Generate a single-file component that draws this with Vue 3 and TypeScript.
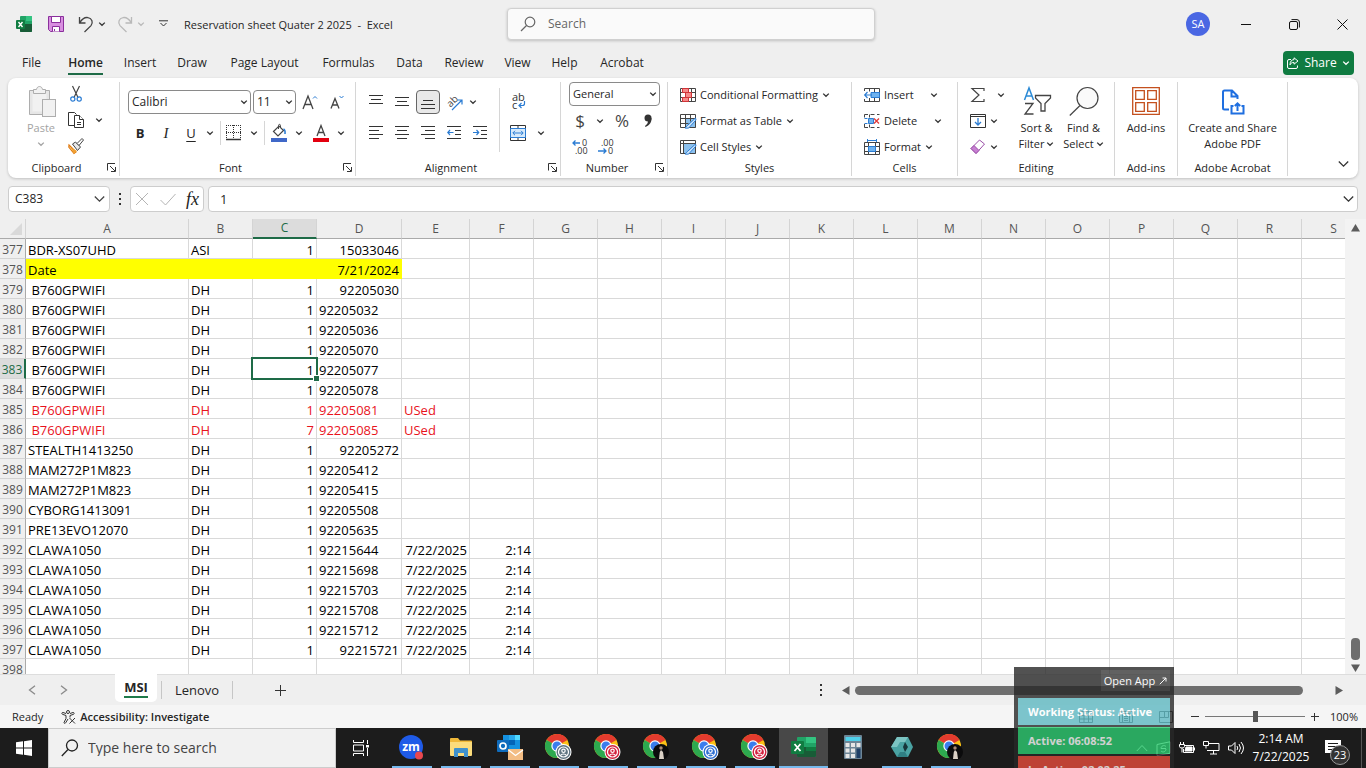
<script setup lang="ts">
import { h, ref } from 'vue'

type Cell = string
interface Row {
  n: number
  cells: Cell[]
  kind?: 'date' | 'used'
  rightD?: boolean
}

const Chevron = () =>
  h('svg', { class: 'chev', width: 8, height: 8, viewBox: '0 0 8 8', fill: 'none', 'aria-hidden': 'true' }, [
    h('path', { d: 'M1.2 2.6 4 5.3 6.8 2.6', stroke: 'currentColor', 'stroke-width': 1.3 }),
  ])

const Launcher = () =>
  h('svg', { width: 9, height: 9, viewBox: '0 0 9 9', fill: 'none', stroke: '#333', 'aria-hidden': 'true' }, [
    h('path', { d: 'M.5 7.5V.5H8M3 3l5 5M8.500 4v4.500H4' }),
  ])

const ChromeIcon = (props: { badge: string }) => {
  const parts = [
    h('circle', { cx: 12, cy: 12, r: 12, fill: '#fbc116' }),
    h('path', { d: 'M12 12 1.600 6A12 12 0 0 1 22.400 6Z', fill: '#e33b2e' }),
    h('path', { d: 'M1.600 6A12 12 0 0 0 12 24L17.200 15 12 12Z', fill: '#2da94f' }),
    h('path', { d: 'M12 6H22.400A12 12 0 0 0 12 0Z', fill: '#e33b2e' }),
    h('circle', { cx: 12, cy: 12, r: 5.7, fill: '#fff' }),
    h('circle', { cx: 12, cy: 12, r: 4.500, fill: '#3b7ded' }),
  ]
  if (props.badge === 'photo') {
    parts.push(
      h('circle', { cx: 18, cy: 18, r: 8, fill: '#0b0b0c' }),
      h('path', { d: 'M16 25 16.800 18 18 16l2 2 1 7Z', fill: '#d8cfc4' }),
      h('circle', { cx: 18, cy: 14, r: 1.700, fill: '#a98a76' }),
    )
  } else {
    parts.push(
      h('circle', { cx: 18.500, cy: 18, r: 8, fill: '#fff' }),
      h('circle', { cx: 18.500, cy: 18, r: 7, fill: props.badge }),
      h('circle', { cx: 18.500, cy: 18, r: 5, fill: 'none', stroke: '#fff', 'stroke-width': 1.2 }),
      h('circle', { cx: 18.500, cy: 16.800, r: 1.7, fill: 'none', stroke: '#fff', 'stroke-width': 1.2 }),
      h('path', { d: 'M15.500 21.500c1-2 5-2 6 0', fill: 'none', stroke: '#fff', 'stroke-width': 1.2 }),
    )
  }
  return h('svg', { width: 27, height: 27, viewBox: '0 0 27 27', 'aria-hidden': 'true' }, parts)
}
ChromeIcon.props = ['badge']

const menu = ['File', 'Home', 'Insert', 'Draw', 'Page Layout', 'Formulas', 'Data', 'Review', 'View', 'Help', 'Acrobat']
const columns = 'ABCDEFGHIJKLMNOPQRS'.split('')

const board = (n: number, serial: string, qty = '1'): Row => ({ n, cells: ['\u00a0B760GPWIFI', 'DH', qty, serial] })
const claw = (n: number, serial: string): Row => ({ n, cells: ['CLAWA1050', 'DH', '1', serial, '7/22/2025', '2:14'] })

const rows: Row[] = [
  { n: 377, cells: ['BDR-XS07UHD', 'ASI', '1', '15033046'], rightD: true },
  { n: 378, cells: ['Date', '', '', '7/21/2024'], kind: 'date', rightD: true },
  { ...board(379, '92205030'), rightD: true },
  board(380, '92205032'),
  board(381, '92205036'),
  board(382, '92205070'),
  board(383, '92205077'),
  board(384, '92205078'),
  { n: 385, cells: ['\u00a0B760GPWIFI', 'DH', '1', '92205081', 'USed'], kind: 'used' },
  { n: 386, cells: ['\u00a0B760GPWIFI', 'DH', '7', '92205085', 'USed'], kind: 'used' },
  { n: 387, cells: ['STEALTH1413250', 'DH', '1', '92205272'], rightD: true },
  { n: 388, cells: ['MAM272P1M823', 'DH', '1', '92205412'] },
  { n: 389, cells: ['MAM272P1M823', 'DH', '1', '92205415'] },
  { n: 390, cells: ['CYBORG1413091', 'DH', '1', '92205508'] },
  { n: 391, cells: ['PRE13EVO12070', 'DH', '1', '92205635'] },
  claw(392, '92215644'),
  claw(393, '92215698'),
  claw(394, '92215703'),
  claw(395, '92215708'),
  claw(396, '92215712'),
  { ...claw(397, '92215721'), rightD: true },
  { n: 398, cells: [] },
]

const isRight = (row: Row, c: number) =>
  c === 2 || c === 5 || (c === 3 && !!row.rightD) || (c === 4 && row.kind !== 'used')

const nameBox = ref('C383')
const formula = ref('1')
const zoom = ref(50)
</script>

<template>
  <div class="screen">
    <header class="titlebar">
      <div class="quick">
        <svg width="16" height="16" viewBox="0 0 16 16" aria-hidden="true">
          <rect x="4" width="12" height="16" rx="1" fill="#21a366" /><path d="M10 0h5a1 1 0 0 1 1 1v4h-6z" fill="#33c481" /><path d="M4 8h12v7a1 1 0 0 1-1 1H5a1 1 0 0 1-1-1z" fill="#185c37" />
          <rect y="4" width="9" height="9" rx="1" fill="#107c41" /><path d="m2.500 6 4 5M6.500 6l-4 5" stroke="#fff" stroke-width="1.4" />
        </svg>
        <button class="bare" aria-label="Save">
          <svg width="16" height="16" viewBox="0 0 16 16" fill="#d88fe0" stroke="#8a2f9c">
            <path d="M.5.5h15v15h-13l-2-2z" /><path d="M3.500.5h9v6h-9zM4.500 15.500v-5h7v5" fill="#fff" /><path d="M6.500 13v2" />
          </svg>
        </button>
        <button class="bare undo" aria-label="Undo">
          <svg width="16" height="17" viewBox="0 0 16 17" fill="none" stroke="#444" stroke-width="1.3"><path d="M1.500 1v6h6M1.800 6.700C4 3 7 1 10 1.600c4 .6 5.500 5 3 8L6.500 16" /></svg>
          <Chevron />
        </button>
        <button class="bare redo" aria-label="Redo" disabled>
          <svg width="16" height="17" viewBox="0 0 16 17" fill="none" stroke="#b9b9b9" stroke-width="1.3"><path d="M14.500 1v6h-6M14.200 6.700C12 3 9 1 6 1.600c-4 .6-5.500 5-3 8L9.500 16" /></svg>
          <Chevron />
        </button>
        <button class="bare custom" aria-label="Customize quick access">
          <svg width="9" height="8" viewBox="0 0 9 8" fill="none" stroke="#333"><path d="M0 .8h9M1.500 3l3 3 3-3" /></svg>
        </button>
        <h1 class="doc">Reservation sheet Quater 2 2025&nbsp; -&nbsp; Excel</h1>
      </div>
      <label class="search">
        <svg width="16" height="16" viewBox="0 0 16 16" fill="none" stroke="#666" stroke-width="1.2"><circle cx="10" cy="6" r="4.800" /><path d="M6.500 9.500 1 15" /></svg>
        <input type="search" placeholder="Search" aria-label="Search" />
      </label>
      <div class="window">
        <button class="avatar">SA</button>
        <button class="bare" aria-label="Minimize"><svg width="11" height="11" viewBox="0 0 11 11" stroke="#111"><path d="M0 5.500h10" /></svg></button>
        <button class="bare" aria-label="Restore"><svg width="11" height="11" viewBox="0 0 11 11" fill="none" stroke="#111"><rect x=".5" y="2.500" width="8" height="8" rx="1.500" /><path d="M2.500.6H8A2.500 2.500 0 0 1 10.400 3v5.500" /></svg></button>
        <button class="bare" aria-label="Close"><svg width="11" height="11" viewBox="0 0 11 11" stroke="#111"><path d="m.5.5 10 10m0-10-10 10" /></svg></button>
      </div>
    </header>

    <nav class="menu">
      <div class="tabs">
        <button v-for="m in menu" :key="m" class="tab" :class="{ on: m === 'Home' }"><span>{{ m }}</span></button>
      </div>
      <button class="share">
        <svg width="12" height="12" viewBox="0 0 12 12" fill="none" stroke="#fff"><path d="M4 2.500H2A1.500 1.500 0 0 0 .5 4v6A1.500 1.500 0 0 0 2 11.500h7A1.500 1.500 0 0 0 10.500 10V8.500M7 .8 11 4 7 7.200V5.400C5 5.400 4 6 3 7.800 3 4.500 4.500 2.800 7 2.600z" /></svg>
        Share
        <Chevron />
      </button>
    </nav>

    <section class="ribbon">
      <div class="group clipboard">
        <div class="body">
          <button class="big paste" disabled>
            <svg width="32" height="32" viewBox="0 0 32 32" fill="#f1f1f1" stroke="#adadad"><path d="M4.500 4.500h20v24h-20z" fill="#e6e6e6" /><path d="M7.500 7.500h14v18h-14z" stroke="none" /><path d="M8.500 7.500v-4h3c.5-4 5.500-4 6 0h3v4z" /><rect x="17.500" y="13.500" width="13" height="17" /></svg>
            <span>Paste</span><Chevron />
          </button>
          <div class="stack">
            <button class="tool" aria-label="Cut"><svg width="16" height="16" viewBox="0 0 16 16" fill="none"><path d="m4.500 0 5.500 11.500M11.500 0 6 11.500" stroke="#444" stroke-width="1.200" /><circle cx="4.800" cy="13" r="2.100" stroke="#2b7cd3" stroke-width="1.200" /><circle cx="11.200" cy="13" r="2.100" stroke="#2b7cd3" stroke-width="1.200" /></svg></button>
            <button class="tool split" aria-label="Copy"><svg width="16" height="16" viewBox="0 0 16 16" fill="#fff" stroke="#333"><path d="M6 13.500H.5V.5h6l2 2" /><path d="M6.500 3.500h5l4 4v8h-9z" /><path d="M11.500 3.500v4h4M9 10.500h4M9 12.500h4" /></svg><Chevron /></button>
            <button class="tool" aria-label="Format Painter"><svg width="16" height="16" viewBox="0 0 16 16"><path d="m1 7 7 7-2 1.500L.8 9z" fill="#fff" stroke="#e07a10" stroke-width="1.200" /><path d="m2 9 7 4-3 2.500z" fill="#f0a030" /><path d="m4.500 6 3-2 5 5-3 3.500z" fill="#e9e9e9" stroke="#444" /><path d="m9 5.500 5-5 1.500 1.500-4.500 5.500z" fill="#fff" stroke="#444" /></svg></button>
          </div>
        </div>
        <footer><span>Clipboard</span><button class="bare" aria-label="Clipboard options"><Launcher /></button></footer>
      </div>

      <div class="group font">
        <div class="body col">
          <div class="line first">
            <label class="combo face"><select aria-label="Font"><option>Calibri</option></select><Chevron /></label>
            <label class="combo size"><select aria-label="Font size"><option>11</option></select><Chevron /></label>
            <button class="tool w27" aria-label="Increase font size"><svg width="16" height="16" viewBox="0 0 16 16" fill="none"><path d="m1 15 5-13 5 13M2.800 10.500h6.400" stroke="#444" stroke-width="1.300" /><path d="m11 4.500 2-2 2 2" stroke="#2b7cd3" /></svg></button>
            <button class="tool w27" aria-label="Decrease font size"><svg width="16" height="16" viewBox="0 0 16 16" fill="none"><path d="m2 14.500 4-10 4 10M3.500 11h5" stroke="#444" stroke-width="1.300" /><path d="m10.500 2 2 2 2-2" stroke="#2b7cd3" /></svg></button>
          </div>
          <div class="line second">
            <button class="tool w26 bold">B</button>
            <button class="tool w26 ital">I</button>
            <button class="tool w24 under">U</button>
            <button class="tool w16" aria-label="Underline options"><Chevron /></button>
            <i class="rule"></i>
            <button class="tool w26" aria-label="Borders"><svg width="16" height="16" viewBox="0 0 16 16" stroke="#333"><path d="M.5 0v14M7.500 0v14M14.500 0v14M0 .5h15M0 7.500h15" stroke-dasharray="1 1" /><path d="M0 14.500h15" stroke-width="1.500" /></svg></button>
            <button class="tool w16" aria-label="Border options"><Chevron /></button>
            <i class="rule"></i>
            <button class="tool w28" aria-label="Fill color"><svg width="16" height="18" viewBox="0 0 16 18" fill="none"><path d="M2.500 7.500 8 2l4.500 4.500L7 12z" stroke="#444" stroke-width="1.200" /><path d="M7.500 5V1.500c0-1.500 2-1.500 2 0V3" stroke="#444" /><path d="M12.500 5c1.500.5 1.800 2 1.500 5" stroke="#2b7cd3" stroke-width="1.600" /><path d="M0 14h16v4H0z" fill="#4068c8" /></svg></button>
            <button class="tool w12" aria-label="Fill color options"><Chevron /></button>
            <button class="tool w32" aria-label="Font color"><svg width="16" height="18" viewBox="0 0 16 18" fill="none"><path d="m4 12 4-10.500L12 12M5.500 8.500h5" stroke="#444" stroke-width="1.300" /><path d="M0 14h16v4H0z" fill="#e3000f" /></svg></button>
            <button class="tool w8" aria-label="Font color options"><Chevron /></button>
          </div>
        </div>
        <footer><span>Font</span><button class="bare" aria-label="Font options"><Launcher /></button></footer>
      </div>

      <div class="group alignment">
        <div class="body">
          <div class="col">
            <div class="line first">
              <button class="tool w26" aria-label="Top align"><svg width="14" height="16" viewBox="0 0 14 16" stroke="#333"><path d="M0 1.500h14M2 5.500h10M0 9.500h14" /></svg></button>
              <button class="tool w26" aria-label="Middle align"><svg width="14" height="16" viewBox="0 0 14 16" stroke="#333"><path d="M0 3.500h14M2 7.500h10M0 11.500h14" /></svg></button>
              <button class="tool w24 pressed" aria-label="Bottom align"><svg width="14" height="16" viewBox="0 0 14 16" stroke="#333"><path d="M2 6.500h10M0 10.500h14M0 14.500h14" /></svg></button>
              <button class="tool w28" aria-label="Orientation"><svg width="17" height="17" viewBox="0 0 17 17"><text x="0" y="11" transform="rotate(-45 5 8)" font-size="10" fill="#444">ab</text><path d="m5 16 10-10M10.500 6H15v4.500" fill="none" stroke="#2b7cd3" stroke-width="1.200" /></svg></button>
              <button class="tool w8" aria-label="Orientation options"><Chevron /></button>
            </div>
            <div class="line second">
              <button class="tool w26" aria-label="Align left"><svg width="14" height="14" viewBox="0 0 14 14" stroke="#333"><path d="M0 .5h14M0 4.500h10M0 8.500h14M0 12.500h10" /></svg></button>
              <button class="tool w26" aria-label="Center"><svg width="14" height="14" viewBox="0 0 14 14" stroke="#333"><path d="M0 .5h14M2 4.500h10M0 8.500h14M2 12.500h10" /></svg></button>
              <button class="tool w26" aria-label="Align right"><svg width="14" height="14" viewBox="0 0 14 14" stroke="#333"><path d="M0 .5h14M4 4.500h10M0 8.500h14M4 12.500h10" /></svg></button>
              <button class="tool w26" aria-label="Decrease indent"><svg width="14" height="14" viewBox="0 0 14 14" fill="none" stroke="#333"><path d="M0 .5h14M8 4.500h6M8 8.500h6M0 12.500h14" /><path d="M6.500 6.500H1M3 4 .8 6.500 3 9" stroke="#2b7cd3" stroke-width="1.200" /></svg></button>
              <button class="tool w26" aria-label="Increase indent"><svg width="14" height="14" viewBox="0 0 14 14" fill="none" stroke="#333"><path d="M0 .5h14M8 4.500h6M8 8.500h6M0 12.500h14" /><path d="M0 6.500h5.500M3.500 4l2.200 2.500L3.500 9" stroke="#2b7cd3" stroke-width="1.200" /></svg></button>
            </div>
          </div>
          <i class="rule tall"></i>
          <div class="col">
            <div class="line first">
              <button class="tool w28" aria-label="Wrap text"><svg width="16" height="18" viewBox="0 0 16 18"><text font-size="11" fill="#333"><tspan x="1" y="8">ab</tspan><tspan x="1" y="16">c</tspan></text><path d="M13.500 8v2.500q0 2-2 2H8M10.500 10 8 12.500l2.500 2.500" fill="none" stroke="#2b7cd3" stroke-width="1.200" /></svg></button>
            </div>
            <div class="line second">
              <button class="tool w26" aria-label="Merge and center"><svg width="16" height="16" viewBox="0 0 16 16" fill="none" stroke="#333"><path d="M.5.5h15v15H.5zM8 .5v3M8 12v3.500" /><path d="M.5 3.500h15v9H.5z" fill="#d6e9fa" stroke="#2b7cd3" /><path d="M3 8h10M5 5.800 2.800 8 5 10.200M11 5.800 13.200 8 11 10.200" stroke="#2b7cd3" /></svg></button>
              <button class="tool w20" aria-label="Merge options"><Chevron /></button>
            </div>
          </div>
        </div>
        <footer><span>Alignment</span><button class="bare" aria-label="Alignment options"><Launcher /></button></footer>
      </div>

      <div class="group number">
        <div class="body col">
          <label class="combo general"><select aria-label="Number format"><option>General</option></select><Chevron /></label>
          <div class="line">
            <button class="tool w24 sym">$</button>
            <button class="tool w16" aria-label="Currency options"><Chevron /></button>
            <button class="tool w28 sym">%</button>
            <button class="tool w24" aria-label="Comma style"><svg width="8" height="14" viewBox="0 0 8 14" fill="#333"><circle cx="4" cy="4" r="3.500" /><path d="M7.500 4c.3 4-2 7.500-6 9l-.5-1c2-1.500 3-3 3-5.500z" /></svg></button>
          </div>
          <div class="line">
            <button class="tool w24" aria-label="Increase decimal"><svg width="16" height="16" viewBox="0 0 16 16"><text font-size="9" fill="#333"><tspan x="10" y="7">0</tspan><tspan x="3" y="15">.00</tspan></text><path d="M8 4H1M3.500 1.500 1 4l2.500 2.500" fill="none" stroke="#2b7cd3" stroke-width="1.300" /></svg></button>
            <button class="tool w28" aria-label="Decrease decimal"><svg width="16" height="16" viewBox="0 0 16 16"><text font-size="9" fill="#333"><tspan x="3" y="7">.00</tspan><tspan x="10" y="15">0</tspan></text><path d="M0 12h8M5.500 9.500 8 12l-2.500 2.500" fill="none" stroke="#2b7cd3" stroke-width="1.300" /></svg></button>
          </div>
        </div>
        <footer><span>Number</span><button class="bare" aria-label="Number options"><Launcher /></button></footer>
      </div>

      <div class="group styles">
        <div class="body col">
          <button class="tool text"><svg width="16" height="14" viewBox="0 0 16 14" fill="none" stroke="#444"><path d="M.5.5h15v13H.5zM.5 4.500h15M.5 9.500h15M5.500.5v13M11.500.5v13" /><path d="M2.500.5h6v4h-6zM5.500 4.500h6v5h-6zM2.500 9.500h6v4h-6z" fill="#f58a8a" stroke="#d13438" /></svg>Conditional Formatting<Chevron /></button>
          <button class="tool text"><svg width="16" height="15" viewBox="0 0 16 15" fill="none" stroke="#444"><path d="M5 4h11v10H5z" fill="#8cc1ee" stroke="none" /><path d="M.5.5h15v13H.5zM.5 4.500h15M.5 9.500h8M5.500.5v13M10.500.5v7" /><path d="M15.500 4 8 11c-1 .5-1.500 2-3 3 3 .5 4.500 0 5-1.500L16 6z" fill="#cfe6fb" stroke="#2b7cd3" /></svg>Format as Table<Chevron /></button>
          <button class="tool text"><svg width="16" height="15" viewBox="0 0 16 15" fill="none" stroke="#444"><path d="M3 3h13v11H3z" fill="#8cc1ee" stroke="none" /><path d="M.5.5h15v13H.5zM.5 3.500h15M3.500.5v13" /><path d="M15.500 4 8 11c-1 .5-1.500 2-3 3 3 .5 4.500 0 5-1.500L16 6z" fill="#cfe6fb" stroke="#2b7cd3" /></svg>Cell Styles<Chevron /></button>
        </div>
        <footer><span>Styles</span></footer>
      </div>

      <div class="group cells">
        <div class="body col">
          <button class="tool text wide"><svg width="16" height="14" viewBox="0 0 16 14" fill="none" stroke="#444"><path d="M.5 3V.5h15v13H.5V11M5.500.5v3M10.500.5v13M5.500 10v3.500M10 4.500h5.500M10 9.500h5.500" /><path d="M7 4.500h8.500v5H7z" fill="#6fb2ee" stroke="#2b7cd3" /><path d="M8 7H1M3.500 4 .7 7l2.800 3" stroke="#2b7cd3" stroke-width="1.200" /></svg>Insert<Chevron /></button>
          <button class="tool text wide2"><svg width="16" height="14" viewBox="0 0 16 14" fill="none" stroke="#444"><path d="M4 .5H.5v3M.5 10v3.500H4M6.500 .5h4M6.500 13.500h4M13 .5h2.500M13 13.500h2.500M5.500.5v3M5.500 10.500v3" /><path d="M4.500 4.500h5v5h-5zM.5 4.500h3M.5 9.500h3" fill="#6fb2ee" stroke="#2b7cd3" /><path d="m10 4.500 5 5m0-5-5 5" stroke="#e03a3a" stroke-width="1.300" /></svg>Delete<Chevron /></button>
          <button class="tool text"><svg width="16" height="16" viewBox="0 0 16 16" fill="none" stroke="#444"><path d="M.5 3.500h15v12H.5zM.5 7.500h15M.5 12.500h15M4.500 3.500v12M11.500 3.500v12" /><path d="M4.500 7.500h7v5h-7z" fill="#6fb2ee" stroke="#2b7cd3" /><path d="M3.500 1.500h9M3.500 0v3M12.500 0v3" stroke="#2b7cd3" /></svg>Format<Chevron /></button>
        </div>
        <footer><span>Cells</span></footer>
      </div>

      <div class="group editing">
        <div class="body">
          <div class="stack">
            <button class="tool split far" aria-label="AutoSum"><svg width="16" height="16" viewBox="0 0 16 16" fill="none" stroke="#444" stroke-width="1.200"><path d="M14 4V1.500H2L9 8l-7 6.500h12V12" /></svg><Chevron /></button>
            <button class="tool split" aria-label="Fill"><svg width="16" height="14" viewBox="0 0 16 14" fill="none" stroke="#333"><path d="M.5.500h15v13H.5zM.5 2.500h15" /><path d="M8 4v7M5 8l3 3 3-3" stroke="#2b7cd3" stroke-width="1.300" /></svg><Chevron /></button>
            <button class="tool split" aria-label="Clear"><svg width="16" height="16" viewBox="0 0 16 16" fill="#fff" stroke="#9b4fa8"><path d="M1 9.500 9.500 1l5 4L6 14.500z" /><path d="M1 9.500 4 6.500l5 5-3 3z" fill="#c77fd2" /></svg><Chevron /></button>
          </div>
          <button class="big w46">
            <svg width="30" height="32" viewBox="0 0 30 32" fill="none" stroke="#444" stroke-width="1.300"><path d="m2.500 14 4.500-12 4.500 12M4 10h6" stroke="#2b8ad6" stroke-width="1.500" /><path d="M3 17.500h8L3 28h8.500M13.500 9.500h15v2.500l-5.500 5.500v7.500h-4v-7.500l-5.500-5.500z" /></svg>
            <span>Sort &amp;</span><span>Filter <Chevron /></span>
          </button>
          <button class="big w46">
            <svg width="30" height="32" viewBox="0 0 30 32" fill="#fafafa" stroke="#444" stroke-width="1.200"><circle cx="18.500" cy="12" r="10.500" /><path d="M11 19.500.8 29.500" /></svg>
            <span>Find &amp;</span><span>Select <Chevron /></span>
          </button>
        </div>
        <footer><span>Editing</span></footer>
      </div>

      <div class="group addins">
        <div class="body center">
          <button class="big">
            <svg width="28" height="32" viewBox="0 0 28 32" fill="none" stroke="#c4501e" stroke-width="1.300"><path d="M.700 1.700h26.600v26.600H.700zM3.700 4.700h8.600v8.600H3.700zM15.700 4.700h8.600v8.600h-8.600zM3.700 16.700h8.600v8.600H3.700zM15.700 16.700h8.600v8.600h-8.600z" /></svg>
            <span>Add-ins</span>
          </button>
        </div>
        <footer><span>Add-ins</span></footer>
      </div>

      <div class="group acrobat">
        <div class="body center">
          <button class="big">
            <svg width="24" height="32" viewBox="0 0 24 32" fill="none" stroke="#1f6fe0" stroke-width="2"><path d="M8 23.500H3.500A1.500 1.500 0 0 1 2 22V6a1.500 1.500 0 0 1 1.500-1.500H11l5.500 5.500v3M10.500 4.500V10.500h6M12.500 20H10.500v7.500h12V20h-2" /><path d="M16.500 25v-7.500M13.800 20l2.700-2.700L19.200 20" /></svg>
            <span>Create and Share</span><span>Adobe PDF</span>
          </button>
        </div>
        <footer><span>Adobe Acrobat</span></footer>
      </div>
      <button class="bare collapse" aria-label="Collapse ribbon"><svg width="11" height="8" viewBox="0 0 11 8" fill="none" stroke="#333" stroke-width="1.300"><path d="m.8 1.500 4.700 4.700 4.700-4.700" /></svg></button>
    </section>

    <section class="formula">
      <label class="namebox"><input v-model="nameBox" aria-label="Name box" /><svg width="11" height="8" viewBox="0 0 11 8" fill="none" stroke="#444" stroke-width="1.300"><path d="m.8 1.500 4.700 4.700 4.700-4.700" /></svg></label>
      <i class="dots"></i>
      <div class="fx">
        <button class="bare" aria-label="Cancel"><svg width="14" height="14" viewBox="0 0 14 14" stroke="#b5b5b5"><path d="m1 1 12 12M13 1 1 13" /></svg></button>
        <button class="bare" aria-label="Enter"><svg width="16" height="14" viewBox="0 0 16 14" fill="none" stroke="#b5b5b5"><path d="m.5 8 5 5L15.500 2" /></svg></button>
        <button class="bare fn">fx</button>
      </div>
      <label class="bar"><input v-model="formula" aria-label="Formula bar" /><svg width="11" height="8" viewBox="0 0 11 8" fill="none" stroke="#333" stroke-width="1.300"><path d="m.8 1.500 4.700 4.700 4.700-4.700" /></svg></label>
    </section>

    <main class="sheet">
      <div class="grid">
        <table>
          <colgroup>
            <col class="c-head" /><col class="c-a" /><col /><col /><col class="c-d" /><col class="c-e" /><col v-for="i in 14" :key="i" />
          </colgroup>
          <thead>
            <tr>
              <th class="corner"><svg width="12" height="12" viewBox="0 0 12 12"><path d="M12 0v12H0z" fill="#d9d9d9" /></svg></th>
              <th v-for="c in columns" :key="c" :class="{ sel: c === 'C' }">{{ c }}</th>
            </tr>
          </thead>
          <tbody>
            <tr v-for="r in rows" :key="r.n" :class="r.kind">
              <th :class="{ sel: r.n === 383 }">{{ r.n }}</th>
              <td v-for="(c, i) in columns" :key="c" :class="{ r: isRight(r, i), fill: r.kind === 'date' && i < 4, active: r.n === 383 && i === 2 }">{{ r.cells[i] }}</td>
            </tr>
          </tbody>
        </table>
      </div>
      <div class="vscroll">
        <svg width="9" height="8" viewBox="0 0 9 8"><path d="M4.500 0 9 7.500H0z" fill="#5c5c5c" /></svg>
        <i></i>
        <svg width="9" height="8" viewBox="0 0 9 8"><path d="M4.500 8 9 .5H0z" fill="#5c5c5c" /></svg>
      </div>
    </main>

    <section class="sheets">
      <button class="bare nav" aria-label="Previous sheet"><svg width="8" height="10" viewBox="0 0 8 10" fill="none" stroke="#8a8a8a" stroke-width="1.300"><path d="M7 .8 1.500 5 7 9.200" /></svg></button>
      <button class="bare nav" aria-label="Next sheet"><svg width="8" height="10" viewBox="0 0 8 10" fill="none" stroke="#8a8a8a" stroke-width="1.300"><path d="M1 .8 6.500 5 1 9.200" /></svg></button>
      <button class="sheet-tab on"><span>MSI</span></button>
      <button class="sheet-tab other">Lenovo</button>
      <button class="bare add" aria-label="New sheet"><svg width="11" height="11" viewBox="0 0 11 11" stroke="#333"><path d="M5.500 0v11M0 5.500h11" /></svg></button>
      <div class="hscroll">
        <i class="dots"></i>
        <svg width="8" height="9" viewBox="0 0 8 9"><path d="M0 4.500 7.500 0v9z" fill="#5c5c5c" /></svg>
        <div class="track"><i></i></div>
        <svg width="8" height="9" viewBox="0 0 8 9"><path d="M8 4.500.5 0v9z" fill="#5c5c5c" /></svg>
      </div>
    </section>

    <section class="status">
      <span>Ready</span>
      <button class="bare access">
        <svg width="15" height="14" viewBox="0 0 15 14" fill="none" stroke="#333"><circle cx="7" cy="2" r="1.500" /><path d="M5 3.500 2 2.500C.8 2.300.3 3.800 1.500 4.300L5 5.500v3l-2 4c0 1 1.200 1.200 1.600.4L7 9M9 3.500l3-1c1.200-.2 1.700 1.300.5 1.800L9 5.500v2M8.500 8l5.500 5.500m0-5.500-5.500 5.500" /></svg>
        Accessibility: Investigate
      </button>
      <div class="views">
        <svg width="14" height="12" viewBox="0 0 14 12" fill="none" stroke="#333"><path d="M.5.5h13v11H.5zM.5 4.500h13M.5 8h13M5 .5v11M9.500.5v11" /></svg>
        <svg width="14" height="12" viewBox="0 0 14 12" fill="none" stroke="#333"><path d="M.5.5h13v11H.5zM3.500 2.500h7v9h-7zM5 5.500h4M5 7.500h4M5 9.500h4" /></svg>
        <svg width="14" height="12" viewBox="0 0 14 12" fill="none" stroke="#333"><path d="M.5.5h13v11H.5zM5.500.5v6H.5M9.500.5v6h-4" /></svg>
      </div>
      <button class="bare" aria-label="Zoom out"><svg width="9" height="9" viewBox="0 0 9 9" stroke="#333"><path d="M0 4.500h8" /></svg></button>
      <input v-model="zoom" class="zoom" type="range" min="0" max="100" aria-label="Zoom" />
      <button class="bare" aria-label="Zoom in"><svg width="9" height="9" viewBox="0 0 9 9" stroke="#333"><path d="M1 4.500h8M4.500 1v8" /></svg></button>
      <span class="pct">100%</span>
    </section>

    <footer class="taskbar">
      <button class="start" aria-label="Start"><svg width="16" height="16" viewBox="0 0 16 16" fill="#fff"><path d="M0 2.300 7 1.300v6.200H0zM8 1.200 16 0v7.500H8zM0 8.500h7v6.200L0 13.700zM8 8.500h8V16l-8-1.200z" /></svg></button>
      <label class="find">
        <svg width="18" height="18" viewBox="0 0 18 18" fill="none" stroke="#222" stroke-width="1.300"><circle cx="11" cy="6.500" r="5.500" /><path d="M7 10.500.8 17" /></svg>
        <input type="search" placeholder="Type here to search" aria-label="Type here to search" />
      </label>
      <button class="taskview" aria-label="Task View"><svg width="17" height="16" viewBox="0 0 17 16" fill="none" stroke="#fff"><path d="M.5 0v2.500h10V0M.5 5h10v6H.5zM.5 16v-2.500h10V16M14.500 0v4M14.500 8v8" /><path d="M13 5h3v2.500h-3z" fill="#fff" stroke="none" /></svg></button>
      <button class="app run" aria-label="Zoom">
        <svg width="25" height="25" viewBox="0 0 25 25"><circle cx="12" cy="12" r="12" fill="#1f5be8" /><text x="12" y="16" text-anchor="middle" font-size="12" font-weight="700" fill="#fff">zm</text><circle cx="20" cy="20.500" r="4" fill="#e8484f" /></svg>
      </button>
      <button class="app run" aria-label="File Explorer">
        <svg width="22" height="20" viewBox="0 0 22 20"><path d="M0 2q0-1 1-1h7l2 2.500h11q1 0 1 1V18H0z" fill="#f0b93a" /><path d="M0 5h22v13q0 1-1 1H1q-1 0-1-1z" fill="#fbdc7c" /><path d="M4 12q0-1 1-1h12q1 0 1 1v8h-4v-4H8v4H4z" fill="#3f91cc" /></svg>
      </button>
      <button class="app run" aria-label="Outlook">
        <svg width="26" height="26" viewBox="0 0 26 26"><path d="M6 1h17v14H6z" fill="#1490df" /><path d="M12 1h6v5h-6z" fill="#28a8ea" /><path d="M18 1h5v5h-5z" fill="#50d9ff" /><path d="M12 6h6v5h-6z" fill="#0364b8" /><rect y="6" width="12" height="12" rx="1" fill="#0f6cbd" /><circle cx="6" cy="12" r="3" fill="none" stroke="#fff" stroke-width="1.700" /><path d="M11 15h15v11H11z" fill="#f3bd84" /><path d="m11.500 16 7 5.500L26 16" fill="none" stroke="#fff" stroke-width="1.300" /></svg>
      </button>
      <button class="app run" aria-label="Chrome profile 1"><ChromeIcon badge="#5f7480" /></button>
      <button class="app run" aria-label="Chrome profile 2"><ChromeIcon badge="#d3223f" /></button>
      <button class="app run" aria-label="Chrome profile 3"><ChromeIcon badge="photo" /></button>
      <button class="app run" aria-label="Chrome profile 4"><ChromeIcon badge="#2f6fd0" /></button>
      <button class="app run" aria-label="Chrome profile 5"><ChromeIcon badge="#d3223f" /></button>
      <button class="app run current" aria-label="Excel">
        <svg width="25" height="22" viewBox="0 0 25 22"><rect x="6" y="1" width="19" height="20" rx="1" fill="#21a366" /><path d="M15 1h9q1 0 1 1v5H15z" fill="#33c481" /><path d="M6 11h19v9q0 1-1 1H7q-1 0-1-1z" fill="#185c37" /><path d="M15 11h10v4H15z" fill="#107c41" /><rect y="5" width="13" height="13" rx="1" fill="#107c41" /><path d="m3.500 8 6 7M9.500 8l-6 7" stroke="#fff" stroke-width="1.800" /></svg>
      </button>
      <button class="app" aria-label="Calculator">
        <svg width="18" height="24" viewBox="0 0 18 24"><rect width="18" height="24" rx="1" fill="#6d8596" /><path d="M1.500 2h15v4h-15z" fill="#4fd0ea" /><path d="M1.500 8h4v4h-4zM7 8h4v4H7zM12.500 8h4v4h-4zM1.500 13.500h4v4h-4zM7 13.500h4v4H7zM1.500 19h4v4h-4zM7 19h4v4H7z" fill="#e6e6e6" /><path d="M12.500 13.500h4V23h-4z" fill="#1e3f66" /></svg>
      </button>
      <button class="app run" aria-label="Work tracker">
        <svg width="22" height="20" viewBox="0 0 22 20"><path d="M6 0h11l5 10-5 10H6L0 10z" fill="#4aa3a3" /><path d="M6 0h11l-3 5H9L6 10 0 10z" fill="#7cc4c2" /><path d="m14 5 3 5-3 5-2-5z" fill="#17363b" /><path d="M6 20 9 15h5l3 5z" fill="#2f7f83" /></svg>
      </button>
      <button class="app run" aria-label="Chrome profile 6"><ChromeIcon badge="photo" /></button>
      <div class="tray">
        <svg width="12" height="8" viewBox="0 0 12 8" fill="none" stroke="#fff"><path d="m.8 7 5.200-5.500L11.200 7" /></svg>
        <svg width="15" height="15" viewBox="0 0 15 15" fill="none" stroke="#fff"><path d="M1 3.500 14 .8v11.500L1 14.500zM10 5.500C8 3.500 5 5 5 7.500h5M5 10c2 2 5 .5 5-2" /></svg>
        <svg width="16" height="12" viewBox="0 0 16 12" fill="none" stroke="#fff"><path d="M1.500 0v2M4.500 0v2M.5 2.500h5v2q0 1.500-2.500 1.500T.5 4.500zM3 6v4.500" /><path d="M6 3.500h8.500v7H4.500V7M15.500 5.500v3" /><path d="M7 5h6v4H6z" fill="#fff" /></svg>
        <svg width="17" height="14" viewBox="0 0 17 14" fill="none" stroke="#fff"><path d="M6 2.500h10v7H4M10.500 9.500v3.500M7 13h7M.5.5h5v4h-5zM3 4.500v3" /></svg>
        <svg width="17" height="14" viewBox="0 0 17 14" fill="none" stroke="#fff"><path d="M.5 5h3L7 1.500v11L3.500 9h-3zM9 5q1.500 2 0 4M11 3q3 4 0 8M13 1q5 6 0 12" /></svg>
        <div class="clock"><span>2:14 AM</span><span>7/22/2025</span></div>
        <button class="notes" aria-label="Notifications"><svg width="16" height="16" viewBox="0 0 16 16"><path d="M0 0h16v13H9l-3 3v-3H0z" fill="#fff" /><path d="M3 3.500h10M3 6.500h10M3 9.500h6" stroke="#1c1c1c" /></svg><b>23</b></button>
        <i class="peek"></i>
      </div>
    </footer>

    <aside class="tracker">
      <button class="open">Open App <svg width="8" height="8" viewBox="0 0 8 8" fill="none" stroke="#fff"><path d="M.8 7.200 7 1M3.500 1H7v3.500" /></svg></button>
      <p class="teal">Working Status: Active</p>
      <p class="green">Active: 06:08:52</p>
      <p class="red">In Active: 02:02:25</p>
    </aside>
  </div>
</template>

<style>
html,
body {
  margin: 0;
  background: #efefef;
  overflow: hidden;
}
</style>

<style scoped>
.screen {
  position: relative;
  display: flex;
  flex-direction: column;
  height: 100vh;
  overflow: hidden;
  background: #efefef;
  color: #262626;
  font-family: 'Open Sans', 'Noto Sans', sans-serif;
  font-size: 12px;
  line-height: 16px;
}
.screen * { box-sizing: border-box; }
svg { flex: none; display: block; overflow: visible; }
button, input, select { font: inherit; color: inherit; margin: 0; padding: 0; border: 0; background: none; border-radius: 0; }
input { outline: 0; min-width: 0; }
.bare { display: flex; align-items: center; justify-content: center; }
.chev { color: #333; }

.titlebar { display: grid; grid-template-columns: 1fr 368px 1fr; align-items: center; height: 48px; flex: none; }
.quick { display: flex; align-items: center; padding-left: 16px; gap: 16px; }
.undo, .redo { gap: 4px; }
.undo { margin-left: -2px; }
.redo { margin-left: -5px; }
.redo .chev { color: #b9b9b9; }
.custom { margin-left: -2px; }
.doc { margin: 1px 0 0; font-size: 11px; font-weight: 400; white-space: nowrap; }
.search { display: flex; align-items: center; gap: 12px; margin-left: 8px; width: 368px; height: 32px; padding: 0 12px; background: #fafafa; border: 1px solid #d0d0d0; border-radius: 4px; box-shadow: 0 1px 3px #0003; }
.search input { flex: 1; }
.search input::placeholder { color: #666; opacity: 1; }
.window { display: flex; align-items: center; justify-content: flex-end; }
.window button { width: 48px; }
.window .avatar { width: 24px; height: 24px; margin-right: 12px; border-radius: 50%; background: #4a67e3; color: #fff; font-size: 11px; }

.menu { display: flex; justify-content: space-between; align-items: center; height: 30px; flex: none; padding: 0 12px 0 9px; }
.tabs { display: grid; grid-template-columns: 45px 63px 46px 58px 87px 81px 41px 68px 39px 55px 60px; }
.tab { display: flex; justify-content: center; white-space: nowrap; }
.tab span { padding: 3px 0 1px; border-bottom: 2px solid transparent; line-height: 18px; }
.tab.on { font-weight: 600; }
.tab.on span { border-color: #1e6b47; }
.share { display: flex; align-items: center; justify-content: center; gap: 5px; width: 71px; height: 24px; background: #0f7b41; border-radius: 4px; color: #fff; }
.share .chev { color: #fff; }

.ribbon { display: flex; flex: none; height: 100px; margin: 0 8px; padding: 4px 0 2px; background: #fff; border-radius: 8px; box-shadow: 0 1px 3px #0003; font-size: 11px; }
.group { display: flex; flex-direction: column; border-right: 1px solid #d6d6d6; height: 94px; }
.body { display: flex; flex: 1; }
.body.center { justify-content: center; }
.col { display: flex; flex-direction: column; }
.group footer { position: relative; display: flex; justify-content: center; height: 16px; }
.group footer button { position: absolute; right: 3px; top: 3px; }
.clipboard { width: 112px; }
.font { width: 236px; }
.alignment { width: 205px; }
.number { width: 107px; }
.styles { width: 184px; }
.cells { width: 106px; }
.editing { width: 157px; }
.addins { width: 63px; }
.acrobat { width: 110px; }
.clipboard footer, .font footer, .alignment footer, .number footer { padding-right: 14px; }
.clipboard .body { padding-left: 14px; }
.font .body { padding-left: 8px; }
.alignment .body { padding-left: 7px; }
.number .body { padding-left: 8px; }
.styles .body, .cells .body, .editing .body { padding-left: 12px; }

.big { display: flex; flex-direction: column; align-items: center; padding-top: 4px; white-space: nowrap; }
.big svg:first-child { margin-bottom: 2px; }
.big span { display: flex; align-items: center; gap: 2px; }
.big .chev { margin-top: 4px; }
.big span .chev { margin: 0; }
.paste { width: 38px; color: #a3a3a3; }
.paste .chev { color: #a3a3a3; }
.stack { display: flex; flex-direction: column; margin: -1px 0 0 6px; }
.stack .tool { width: 20px; }
.stack .split { width: auto; justify-content: flex-start; gap: 11px; padding-left: 2px; }
.editing .stack { margin: 0; width: 43px; }
.editing .stack .split { padding: 0; gap: 4px; }
.editing .stack .far { gap: 11px; }
.w46 { width: 47px; }

.line { display: flex; align-items: center; height: 26px; }
.line.first { height: 32px; margin-top: 4px; }
.line.second { margin-top: 2px; }
.font .second { margin-left: -1px; }
.tool { display: flex; align-items: center; justify-content: center; height: 26px; flex: none; }
.w8 { width: 8px; }
.w12 { width: 12px; }
.w16 { width: 16px; }
.w20 { width: 20px; }
.w24 { width: 24px; }
.w26 { width: 26px; }
.w27 { width: 27px; }
.w28 { width: 28px; }
.w32 { width: 32px; }
.font .w16 { width: 14px; }
.font .rule { margin-left: 3px; }
.rule { width: 1px; height: 24px; background: #d6d6d6; }
.rule.tall { height: 64px; margin: 6px 5px 0 6px; }
.bold { font-weight: 700; font-size: 13px; }
.ital { font-family: 'Liberation Serif', serif; font-style: italic; font-size: 15px; }
.under { text-decoration: underline; font-size: 13px; text-underline-offset: 3px; }
.sym { font-size: 17px; color: #444; }
.pressed { height: 24px; margin: 0 1px; border: 1px solid #666; border-radius: 4px; background: #e9e9e9; }
.combo { position: relative; display: flex; align-items: center; height: 24px; border: 1px solid #8a8a8a; border-radius: 4px; background: #fff; }
.combo select { appearance: none; width: 100%; height: 22px; padding-left: 3px; outline: 0; }
.combo .chev { position: absolute; right: 2px; pointer-events: none; }
.face { width: 123px; margin-right: 2px; font-size: 12px; }
.size { width: 43px; font-size: 12px; }
.general { width: 91px; margin-bottom: 2px; }
.number .line { margin-left: -1px; }
.text { justify-content: flex-start; gap: 4px; white-space: nowrap; }
.wide { width: 74px; }
.wide2 { width: 78px; }
.wide .chev, .wide2 .chev { margin-left: auto; }
.collapse { margin: auto 9px 8px auto; }

.formula { display: flex; flex: none; align-items: center; height: 41px; padding: 0 8px; }
.formula label, .fx { display: flex; align-items: center; height: 26px; background: #fff; border: 1px solid #cdcdcd; border-radius: 4px; }
.namebox { width: 102px; padding: 0 4px 0 6px; }
.namebox input { flex: 1; }
.dots { width: 2px; height: 2px; margin: 0 9px; background: #333; box-shadow: 0 -5px #333, 0 5px #333; flex: none; }
.fx { width: 74px; justify-content: space-between; padding: 0 4px; margin-right: 4px; }
.fn { font: italic 18px/20px 'Liberation Serif', serif; color: #222; }
.bar { flex: 1; padding: 0 3px 0 11px; }
.bar input { flex: 1; font-size: 13px; }

.sheet { display: flex; flex: 1; min-height: 0; }
.grid { flex: 1; min-width: 0; overflow: hidden; background: #fff; }
table { table-layout: fixed; width: 1366px; border-spacing: 0; color: #000; }
col { width: 64px; }
.c-head { width: 26px; }
.c-a { width: 163px; }
.c-d { width: 85px; }
.c-e { width: 68px; }
th { height: 20px; padding: 0; background: #efefef; color: #555; font-size: 12px; font-weight: 400; line-height: 18px; border-right: 1px solid #d4d4d4; border-bottom: 1px solid #d4d4d4; }
thead th { border-bottom-color: #aaa; }
thead .sel { background: #dcdcdc; color: #1e6b47; border-bottom: 2px solid #1e6b47; }
.corner svg { margin: 0 0 0 10px; }
tbody th { padding-top: 3px; border-right-color: #aaa; line-height: 16px; text-align: center; }
tbody th.sel { background: #dcdcdc; color: #1e6b47; border-right: 2px solid #1e6b47; }
td { height: 20px; padding: 3px 2px 0; font-size: 13px; line-height: 16px; border-right: 1px solid #d9d9d9; border-bottom: 1px solid #d9d9d9; white-space: nowrap; }
.r { text-align: right; }
.used td { color: #e8131d; }
.fill { background: #ff0; border-color: #ff0; }
.active { position: relative; }
.active::before { content: ''; position: absolute; inset: -2px; border: 2px solid #1e6b47; }
.active::after { content: ''; position: absolute; right: -3px; bottom: -3px; width: 5px; height: 5px; background: #1e6b47; box-shadow: 0 0 0 1px #fff; }
.vscroll { display: flex; flex-direction: column; align-items: center; width: 21px; padding: 5px 0 2px; background: #f3f3f3; }
.vscroll i { width: 9px; height: 22px; margin: auto 0 4px; background: #6e6e6e; border-radius: 4px; }

.sheets { display: flex; align-items: center; flex: none; height: 31px; border-top: 1px solid #ddd; }
.nav { width: 32px; }
.nav:first-child { margin-left: 16px; }
.sheet-tab { font-size: 13px; height: 28px; }
.sheet-tab.on { align-self: flex-start; margin: -1px 4px 0 35px; width: 42px; background: #fff; border-radius: 0 0 5px 5px; font-weight: 700; }
.sheet-tab.on span { display: inline-block; padding-bottom: 1px; border-bottom: 2px solid #1e7a4a; }
.other { width: 72px; height: 18px; border: solid #c6c6c6; border-width: 0 1px; }
.add { margin-left: 42px; }
.hscroll { display: flex; align-items: center; flex: none; width: 40%; margin-left: auto; padding-right: 23px; }
.hscroll .dots { margin: 0 20px 0 0; }
.track { flex: 1; padding: 0 32px 0 5px; }
.track i { display: block; height: 9px; border-radius: 5px; background: #6e6e6e; }

.status { display: flex; align-items: center; flex: none; height: 23px; padding: 0 8px 0 12px; background: #f5f5f5; font-size: 11px; }
.access { gap: 4px; margin-left: 18px; font-weight: 600; }
.views { display: flex; gap: 26px; margin-left: auto; margin-right: 18px; }
.zoom { appearance: none; width: 100px; height: 11px; margin: 0 5px; background: linear-gradient(#777, #777) center / 100% 1px no-repeat; }
.zoom::-webkit-slider-thumb { appearance: none; width: 5px; height: 11px; background: #555; }
.pct { width: 39px; text-align: right; }

.taskbar { display: flex; flex: none; height: 40px; background: #1c1c1c; color: #fff; }
.taskbar button { display: flex; align-items: center; justify-content: center; flex: none; }
.start { width: 48px; }
.find { display: flex; align-items: center; gap: 9px; width: 288px; padding: 0 12px; background: #f1f1f1; border: 1px solid #ccc; color: #333; font-size: 14px; }
.find input { flex: 1; }
.find input::placeholder { color: #444; opacity: 1; }
.taskview { width: 51px; }
.app { width: 49px; border-bottom: 2px solid transparent; }
.app.run { background: linear-gradient(#76b9ed, #76b9ed) center bottom / 40px 2px no-repeat border-box; }
.app.current { background: linear-gradient(#76b9ed, #76b9ed) center bottom / 49px 2px no-repeat border-box, #484848 border-box; }
.tray { display: flex; align-items: center; margin-left: auto; gap: 8px; padding-right: 4px; }
.clock { display: flex; flex-direction: column; align-items: center; width: 56px; line-height: 18px; white-space: nowrap; }
.notes { position: relative; width: 32px; margin-right: 4px; height: 40px; }
.notes b { position: absolute; left: 13px; top: 17px; width: 20px; height: 20px; border: 1px solid #999; border-radius: 50%; background: #333; font-size: 11px; font-weight: 400; line-height: 18px; }
.peek { width: 1px; height: 40px; background: #555; }

.tracker { position: absolute; right: 192px; bottom: 0; width: 160px; height: 101px; padding: 3px 4px 0; overflow: hidden; background: #282828; color: #fff; opacity: 0.8; }
.open { display: flex; align-items: center; justify-content: center; gap: 4px; width: 69px; height: 21px; margin: 0 0 7px auto; background: #3a3a3a; font-size: 11px; white-space: nowrap; }
.tracker p { height: 27px; margin: 0 0 2px; padding-left: 10px; font-size: 11px; font-weight: 700; line-height: 27px; white-space: nowrap; }
.teal { background: #5fb9c2; }
.green { background: #2ecc71; }
.red { background: #e74c3c; }
</style>
